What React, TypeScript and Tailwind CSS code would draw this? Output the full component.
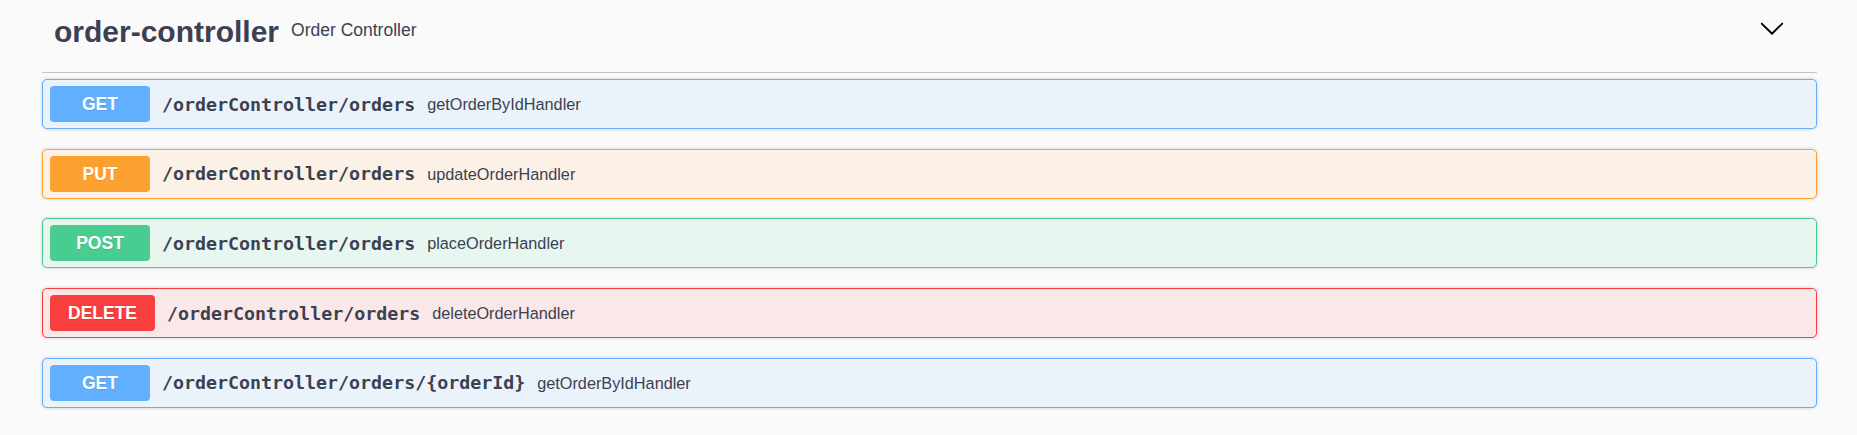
import React from "react";

type Op = {
  method: string;
  path: string;
  desc: string;
  row: string;
  badge: string;
};

const ops: Op[] = [
  {
    method: "GET",
    path: "/orderController/orders",
    desc: "getOrderByIdHandler",
    row: "border-[#61affe] bg-[#ebf3fa]",
    badge: "bg-[#61affe]",
  },
  {
    method: "PUT",
    path: "/orderController/orders",
    desc: "updateOrderHandler",
    row: "border-[#fca130] bg-[#fbf1e6]",
    badge: "bg-[#fca130]",
  },
  {
    method: "POST",
    path: "/orderController/orders",
    desc: "placeOrderHandler",
    row: "border-[#49cc90] bg-[#e8f6f0]",
    badge: "bg-[#49cc90]",
  },
  {
    method: "DELETE",
    path: "/orderController/orders",
    desc: "deleteOrderHandler",
    row: "border-[#f93e3e] bg-[#fae7e7]",
    badge: "bg-[#f93e3e]",
  },
  {
    method: "GET",
    path: "/orderController/orders/{orderId}",
    desc: "getOrderByIdHandler",
    row: "border-[#61affe] bg-[#ebf3fa]",
    badge: "bg-[#61affe]",
  },
];

function Chevron() {
  return (
    <svg
      viewBox="0 0 20 20"
      className="mb-[8px] h-[26px] w-[26px] shrink-0"
      aria-hidden="true"
    >
      <path
        fill="#000"
        d="M17.418 6.109c.272-.268.709-.268.979 0s.271.701 0 .969l-7.908 7.83c-.27.268-.707.268-.979 0l-7.908-7.83c-.27-.268-.27-.701 0-.969.271-.268.709-.268.979 0L10 13.25l7.418-7.141z"
      />
    </svg>
  );
}

function OpRow({ op }: { op: Op }) {
  return (
    <div
      className={`flex h-[50px] items-center rounded-[5px] border px-[7px] shadow-[0_0_3.75px_rgba(0,0,0,0.19)] ${op.row}`}
    >
      <span
        className={`flex h-[36px] min-w-[100px] shrink-0 items-center justify-center rounded-[4px] px-[18px] text-[17.5px] font-bold leading-[20px] text-white [text-shadow:0_1px_0_rgba(0,0,0,0.1)] ${op.badge}`}
      >
        {op.method}
      </span>
      <span className="pl-[12px] pr-[12px] font-['DejaVu_Sans_Mono',monospace] text-[18.3px] font-bold leading-[21px] text-[#3b4151]">
        {op.path}
      </span>
      <span className="text-[16.25px] leading-[20px] text-[#3b4151]">
        {op.desc}
      </span>
    </div>
  );
}

export default function App() {
  return (
    <div className="min-h-[435px] w-full bg-[#fafafa] font-['Liberation_Sans',Arial,sans-serif]">
      <div className="ml-[42px] mr-[40px]">
        <div className="flex h-[73px] items-center border-b border-[#c1c3c7] pb-[8px] pl-[12px] pr-[32px]">
          <h3 className="text-[30px] font-bold leading-[34px] text-[#3b4151]">
            order-controller
          </h3>
          <small className="mb-[4px] ml-[12px] flex-1 text-[17.5px] leading-[20px] text-[#3b4151]">
            Order Controller
          </small>
          <Chevron />
        </div>
        <div className="mt-[6.3px] flex flex-col gap-[19.6px]">
          {ops.map((op, i) => (
            <OpRow key={i} op={op} />
          ))}
        </div>
      </div>
    </div>
  );
}
